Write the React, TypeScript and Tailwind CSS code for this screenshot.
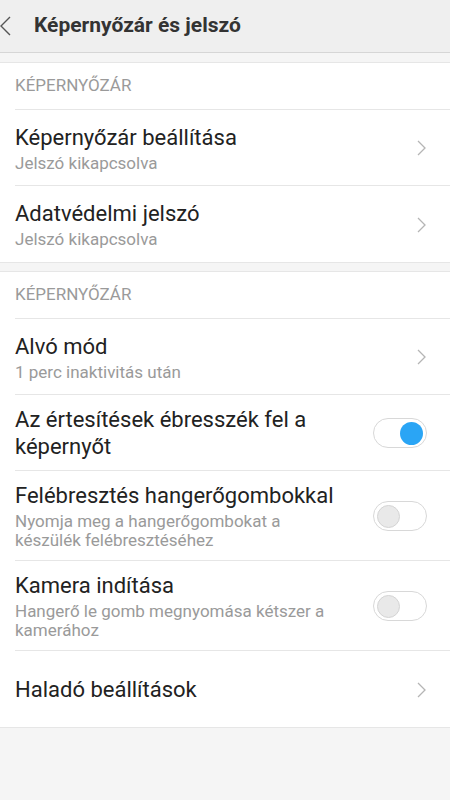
type Row = {
  title: string
  sub?: string
  kind: "link" | "on" | "off"
}

function Chevron() {
  return (
    <svg width="10" height="16" viewBox="0 0 10 16" className="shrink-0 mr-[1px]">
      <polyline points="2,1 9,8 2,15" fill="none" stroke="#b5b5b5" strokeWidth="1.3" />
    </svg>
  )
}

function BackArrow() {
  return (
    <svg width="12" height="20" viewBox="0 0 12 20" className="shrink-0">
      <polyline points="10,1 1,10 10,19" fill="none" stroke="#555" strokeWidth="1.4" />
    </svg>
  )
}

function Toggle({ on }: { on: boolean }) {
  return (
    <div className="w-[54px] h-[30px] rounded-full border border-[#d8d8d8] bg-white flex items-center px-[3px] shrink-0">
      {on ? (
        <div className="ml-auto w-[23px] h-[23px] rounded-full bg-[#2aa5f5]" />
      ) : (
        <div className="w-[23px] h-[23px] rounded-full bg-[#e9e9e9] border border-[#d4d4d4]" />
      )}
    </div>
  )
}

function SettingRow({ row, last }: { row: Row; last: boolean }) {
  return (
    <div className={`flex items-center min-h-[76px] ml-[15px] pr-[23px] pt-[11px] pb-[10px] ${last ? "" : "border-b border-[#e6e6e6]"}`}>
      <div className="flex-1 min-w-0 pr-[24px]">
        <div className="text-[22px] leading-[27px] text-[#222]">{row.title}</div>
        {row.sub && <div className="text-[17px] leading-[19px] text-[#9a9a9a] mt-[3px]">{row.sub}</div>}
      </div>
      {row.kind === "link" ? <Chevron /> : <Toggle on={row.kind === "on"} />}
    </div>
  )
}

function Section({ label, rows }: { label: string; rows: Row[] }) {
  return (
    <div className="bg-white border-y border-[#e6e6e6]">
      <div className="ml-[15px] h-[47px] flex items-center border-b border-[#e6e6e6] text-[17px] text-[#9a9a9a]">
        {label}
      </div>
      {rows.map((r, i) => (
        <SettingRow key={r.title} row={r} last={i === rows.length - 1} />
      ))}
    </div>
  )
}

export default function App() {
  const first: Row[] = [
    { title: "Képernyőzár beállítása", sub: "Jelszó kikapcsolva", kind: "link" },
    { title: "Adatvédelmi jelszó", sub: "Jelszó kikapcsolva", kind: "link" },
  ]
  const second: Row[] = [
    { title: "Alvó mód", sub: "1 perc inaktivitás után", kind: "link" },
    { title: "Az értesítések ébresszék fel a képernyőt", kind: "on" },
    { title: "Felébresztés hangerőgombokkal", sub: "Nyomja meg a hangerőgombokat a készülék felébresztéséhez", kind: "off" },
    { title: "Kamera indítása", sub: "Hangerő le gomb megnyomása kétszer a kamerához", kind: "off" },
    { title: "Haladó beállítások", kind: "link" },
  ]

  return (
    <div className="min-h-[800px] bg-[#f5f5f5]" style={{ fontFamily: "Roboto, 'Noto Sans', sans-serif" }}>
      <div className="h-[53px] bg-[#efefef] border-b border-[#d6d6d6] flex items-center">
        <BackArrow />
        <span className="ml-[22px] text-[21px] font-bold text-[#333]">Képernyőzár és jelszó</span>
      </div>
      <div className="pt-[9px] flex flex-col gap-[8px]">
        <Section label="KÉPERNYŐZÁR" rows={first} />
        <Section label="KÉPERNYŐZÁR" rows={second} />
      </div>
    </div>
  )
}
